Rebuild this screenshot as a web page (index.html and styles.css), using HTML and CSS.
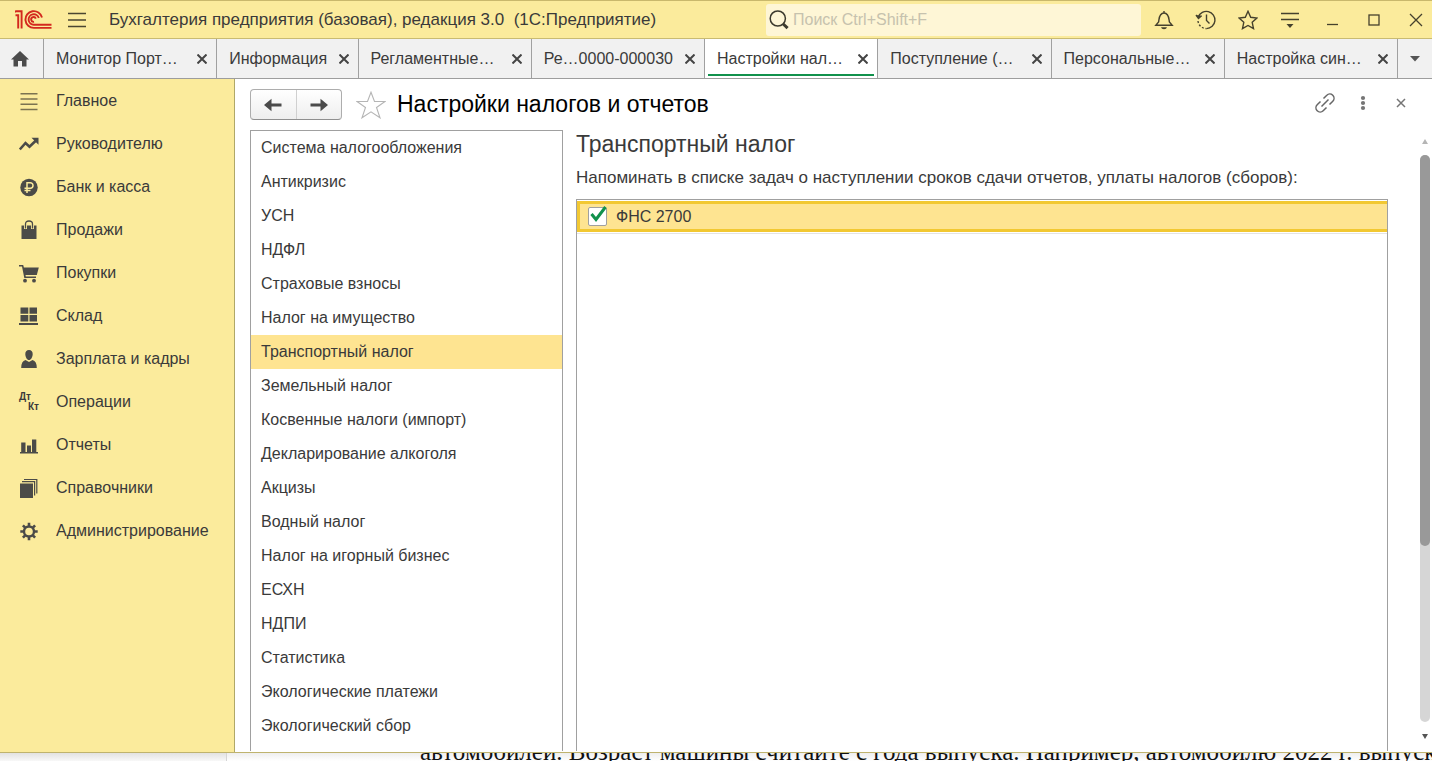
FILE: index.html
```html
<!DOCTYPE html>
<html lang="ru">
<head>
<meta charset="utf-8">
<title>Бухгалтерия предприятия</title>
<link rel="stylesheet" href="styles.css">
</head>
<body>
<div class="window">
  <header class="titlebar">
    <svg class="logo" width="38" height="20" viewBox="0 0 38 20" fill="none" stroke="#d3281e" stroke-width="1.9" aria-label="1С">
      <path d="M.5 5.2H3.2V18.5M0 2.2L1 1.2H6.6V18.5"/>
      <path d="M27 7.4A8.4 8.4 0 1 0 19 17.9H36.5"/>
      <path d="M23.8 8A5.2 5.2 0 1 0 19 14.7H36.5"/>
      <path d="M20.8 8.6A2.4 2.4 0 1 0 19 11.8"/>
    </svg>
    <button class="icon-btn menu-btn" aria-label="Меню"><svg width="18" height="16" viewBox="0 0 18 16" stroke="#4a4630" stroke-width="1.4"><path d="M0 1.5H18M0 8H18M0 14.5H18"/></svg></button>
    <div class="app-title">Бухгалтерия предприятия (базовая), редакция 3.0&nbsp; (1С:Предприятие)</div>
    <label class="search">
      <svg width="20" height="20" viewBox="0 0 20 20" fill="none" stroke="#3c3a2e"><circle cx="8.8" cy="8.5" r="7.6" stroke-width="1.5"/><path d="M14.2 14L18.6 18.2" stroke-width="3"/></svg>
      <input type="text" placeholder="Поиск Ctrl+Shift+F" aria-label="Поиск">
    </label>
    <div class="tools">
      <button class="icon-btn" aria-label="Уведомления"><svg width="20" height="20" viewBox="0 0 20 20" fill="none" stroke="#45412d" stroke-width="1.4"><path d="M10 1V3M1.8 15.3H18.2L15.4 12C14.8 9 15.2 3 10 3S5.2 9 4.6 12Z"/><path d="M7 17.3H13Q12.500 19.300 10 19.300T7 17.300Z" fill="#45412d" stroke="none"/></svg></button>
      <button class="icon-btn" aria-label="История"><svg width="22" height="20" viewBox="0 0 22 20" fill="none" stroke="#45412d" stroke-width="1.4"><path d="M3.300 7A8.600 8.600 0 1 1 11.500 18.600M11.500 4.500V10.500L14.500 13.500"/><path d="M3 11A8.600 8.600 0 0 0 11.500 18.600" stroke-dasharray="2 1.800"/><path d="M1 5L3.500 8.500L6.600 5.800" fill="#45412d"/></svg></button>
      <button class="icon-btn" aria-label="Избранное"><svg width="20" height="20" viewBox="0 0 20 20" fill="none" stroke="#45412d" stroke-width="1.400"><path d="M10 1.300L12.700 7.300L18.900 8L14.200 12.300L15.500 18.600L10 15.500L4.500 18.600L5.800 12.300L1.100 8L7.300 7.300Z"/></svg></button>
      <button class="icon-btn" aria-label="Настройки"><svg width="20" height="20" viewBox="0 0 20 20" fill="none" stroke="#45412d" stroke-width="1.500"><path d="M1 3.500H19M1 9.500H19"/><path d="M6.500 14H13.500L10 18Z" fill="#45412d" stroke="none"/></svg></button>
      <button class="icon-btn" aria-label="Свернуть"><svg width="20" height="20" viewBox="0 0 20 20" stroke="#45412d" stroke-width="1.300"><path d="M5 14.500H16"/></svg></button>
      <button class="icon-btn" aria-label="Развернуть"><svg width="20" height="20" viewBox="0 0 20 20" fill="none" stroke="#45412d" stroke-width="1.300"><rect x="5" y="5" width="10" height="10"/></svg></button>
      <button class="icon-btn" aria-label="Закрыть"><svg width="20" height="20" viewBox="0 0 20 20" stroke="#45412d" stroke-width="1.300"><path d="M4 4L16 16M16 4L4 16"/></svg></button>
    </div>
  </header>

  <nav class="tabs" aria-label="Открытые окна">
    <button class="home" aria-label="Начальная страница"><svg width="18" height="16" viewBox="0 0 18 16" fill="#4b4b4b"><path d="M9 0L18 8.600H15.500V15.500H11V10H7V15.500H2.500V8.600H0Z"/></svg></button>
    <div class="tab"><a href="#">Монитор Порт…</a><button class="tab-close" aria-label="Закрыть"><svg width="10" height="10" viewBox="0 0 10 10"><path d="M.5 .5L9.500 9.500M9.500 .5L.5 9.500"/></svg></button></div>
    <div class="tab short"><a href="#">Информация</a><button class="tab-close" aria-label="Закрыть"><svg width="10" height="10" viewBox="0 0 10 10"><path d="M.5 .5L9.500 9.500M9.500 .5L.5 9.500"/></svg></button></div>
    <div class="tab"><a href="#">Регламентные…</a><button class="tab-close" aria-label="Закрыть"><svg width="10" height="10" viewBox="0 0 10 10"><path d="M.5 .5L9.500 9.500M9.500 .5L.5 9.500"/></svg></button></div>
    <div class="tab"><a href="#">Ре…0000-000030</a><button class="tab-close" aria-label="Закрыть"><svg width="10" height="10" viewBox="0 0 10 10"><path d="M.5 .5L9.500 9.500M9.500 .5L.5 9.500"/></svg></button></div>
    <div class="tab active"><a href="#">Настройки нал…</a><button class="tab-close" aria-label="Закрыть"><svg width="10" height="10" viewBox="0 0 10 10"><path d="M.5 .5L9.500 9.500M9.500 .5L.5 9.500"/></svg></button></div>
    <div class="tab"><a href="#">Поступление (…</a><button class="tab-close" aria-label="Закрыть"><svg width="10" height="10" viewBox="0 0 10 10"><path d="M.5 .5L9.500 9.500M9.500 .5L.5 9.500"/></svg></button></div>
    <div class="tab"><a href="#">Персональные…</a><button class="tab-close" aria-label="Закрыть"><svg width="10" height="10" viewBox="0 0 10 10"><path d="M.5 .5L9.500 9.500M9.500 .5L.5 9.500"/></svg></button></div>
    <div class="tab"><a href="#">Настройка син…</a><button class="tab-close" aria-label="Закрыть"><svg width="10" height="10" viewBox="0 0 10 10"><path d="M.5 .5L9.500 9.500M9.500 .5L.5 9.500"/></svg></button></div>
    <button class="more" aria-label="Все окна"><svg width="10" height="6" viewBox="0 0 10 6" fill="#555"><path d="M0 0H10L5 5.500Z"/></svg></button>
  </nav>

  <div class="body">
    <nav class="sidebar" aria-label="Разделы">
      <a href="#"><svg viewBox="0 0 20 20" stroke="#7b7350" stroke-width="1.500"><path d="M1.500 2.800H18.500M1.500 8H18.500M1.500 13.200H18.500M1.500 18.400H18.500"/></svg>Главное</a>
      <a href="#"><svg viewBox="0 0 20 20" fill="none" stroke="#4b4b48" stroke-width="2.600"><path d="M.8 15.500L6.500 9L10.500 12.800L17 6.500"/><path d="M12.500 3.800H19.500V10.800Z" fill="#4b4b48" stroke="none"/></svg>Руководителю</a>
      <a href="#"><svg viewBox="0 0 20 20"><circle cx="10" cy="10.500" r="8.700" fill="#4b4b48"/><path d="M8 16V5.800H11.300A2.700 2.700 0 0 1 11.300 11.200H5.500M5.500 13.500H11.500" fill="none" stroke="#fbeb9c" stroke-width="1.500"/></svg>Банк и касса</a>
      <a href="#"><svg viewBox="0 0 20 20"><path d="M2.500 5.500H17.500V19H2.500Z" fill="#4b4b48"/><path d="M6.500 9V4Q6.500 1 10 1T13.500 4V9" fill="none" stroke="#fbeb9c" stroke-width="3"/><path d="M6.500 8.500V4Q6.500 1 10 1T13.500 4V8.500" fill="none" stroke="#4b4b48" stroke-width="1.300"/></svg>Продажи</a>
      <a href="#"><svg viewBox="0 0 20 20" fill="#4b4b48"><path d="M0 2H4.200L4.900 4.500H19.800L17.800 12H6.500L6.800 13.500H17V15H5.300L3 3.500H0Z"/><circle cx="6" cy="17.700" r="1.900"/><circle cx="15" cy="17.700" r="1.900"/></svg>Покупки</a>
      <a href="#"><svg viewBox="0 0 20 20" fill="#4b4b48"><path d="M1.500 1.500H9.300V7.800H1.500ZM10.500 1.500H18V7.800H10.500ZM1.500 9H9.300V15.500H1.500ZM10.500 9H18V15.500H10.500ZM0 17H19V19H0Z"/></svg>Склад</a>
      <a href="#"><svg viewBox="0 0 20 20" fill="#4b4b48"><path d="M10 1C12.500 1 13.800 2.800 13.700 5.200C13.600 8 12 11 10 11S6.400 8 6.300 5.200C6.200 2.800 7.500 1 10 1Z"/><path d="M6.500 11L10 13L13.500 11Q17.800 12 17.800 19H2.200Q2.200 12 6.500 11Z"/></svg>Зарплата и кадры</a>
      <a href="#"><span class="dtkt" aria-hidden="true"><b>Дт</b><b>Кт</b></span>Операции</a>
      <a href="#"><svg viewBox="0 0 20 20" fill="#4b4b48"><path d="M1 18V17H2.200V7.500H6.500V17H8V10.500H12V17H13V4.500H17.300V17H19V18.500H1Z"/></svg>Отчеты</a>
      <a href="#"><svg viewBox="0 0 20 20"><path d="M1 5.500H14V20H1Z" fill="#4b4b48"/><path d="M3 3.600H15.600V17.500M5 1.500H17.800V15.500" fill="none" stroke="#4b4b48" stroke-width="1.200"/></svg>Справочники</a>
      <a href="#"><svg viewBox="0 0 20 20" fill="none" stroke="#4b4b48"><circle cx="10" cy="10.500" r="5" stroke-width="2.400"/><path d="M10 1.800V5M10 16V19.200M1.300 10.500H4.500M15.500 10.500H18.700M3.900 4.400L6.200 6.700M13.800 14.300L16.100 16.600M3.900 16.600L6.200 14.300M13.800 6.700L16.100 4.400" stroke-width="2.600"/></svg>Администрирование</a>
    </nav>

    <main class="page">
      <div class="page-head">
        <div class="history">
          <button aria-label="Назад"><svg width="18" height="14" viewBox="0 0 18 14" fill="#4b4b4b"><path d="M0 7L7.500 .8V5.500H17.500V8.500H7.500V13.200Z"/></svg></button>
          <button aria-label="Вперед"><svg width="18" height="14" viewBox="0 0 18 14" fill="#4b4b4b"><path d="M18 7L10.500 .8V5.500H.5V8.500H10.500V13.200Z"/></svg></button>
        </div>
        <button class="icon-btn fav" aria-label="В избранное"><svg width="30" height="28" viewBox="0 0 30 28" fill="none" stroke="#b5b5b5" stroke-width="1.100"><path d="M15 1.200L18.500 10.500H29L20.500 16.500L24 26.800L15 20.800L6 26.800L9.500 16.500L1 10.500H11.500Z"/></svg></button>
        <h1>Настройки налогов и отчетов</h1>
        <div class="page-tools">
          <button class="icon-btn" aria-label="Ссылка"><svg width="22" height="22" viewBox="0 0 22 22" fill="none" stroke="#666" stroke-width="1.500"><path d="M7.500 14.500L14.500 7.500M9.500 6.500L12.800 3.300A4.200 4.200 0 0 1 18.800 9.200L15.500 12.500M12.500 15.500L9.200 18.800A4.200 4.200 0 0 1 3.200 12.800L6.500 9.500"/></svg></button>
          <button class="icon-btn" aria-label="Ещё"><svg width="22" height="22" viewBox="0 0 22 22" fill="#757575"><circle cx="11" cy="6" r="2.100"/><circle cx="11" cy="11" r="2.100"/><circle cx="11" cy="16" r="2.100"/></svg></button>
          <button class="icon-btn" aria-label="Закрыть"><svg width="22" height="22" viewBox="0 0 22 22" stroke="#757575" stroke-width="1.500"><path d="M7 7L15 15M15 7L7 15"/></svg></button>
        </div>
      </div>
      <div class="content">
        <nav class="sections" aria-label="Налоги и отчеты">
          <a href="#">Система налогообложения</a>
          <a href="#">Антикризис</a>
          <a href="#">УСН</a>
          <a href="#">НДФЛ</a>
          <a href="#">Страховые взносы</a>
          <a href="#">Налог на имущество</a>
          <a href="#" class="selected" aria-current="true">Транспортный налог</a>
          <a href="#">Земельный налог</a>
          <a href="#">Косвенные налоги (импорт)</a>
          <a href="#">Декларирование алкоголя</a>
          <a href="#">Акцизы</a>
          <a href="#">Водный налог</a>
          <a href="#">Налог на игорный бизнес</a>
          <a href="#">ЕСХН</a>
          <a href="#">НДПИ</a>
          <a href="#">Статистика</a>
          <a href="#">Экологические платежи</a>
          <a href="#">Экологический сбор</a>
        </nav>
        <section class="detail">
          <h2>Транспортный налог</h2>
          <p>Напоминать в списке задач о наступлении сроков сдачи отчетов, уплаты налогов (сборов):</p>
          <div class="grid">
            <label class="grid-row">
              <span class="check"><input type="checkbox" checked><svg width="20" height="20" viewBox="0 0 20 20" fill="none" stroke="#11914c" stroke-width="3"><path d="M3.500 8L8 13.500L17.500 1"/></svg></span>
              ФНС 2700
            </label>
          </div>
        </section>
        <div class="scroll">
          <button aria-label="Вверх"><svg width="6" height="5" viewBox="0 0 6 5" fill="#b5b5b5"><path d="M0 5H6L3 0Z"/></svg></button>
          <div class="track"><div class="thumb"></div></div>
          <button aria-label="Вниз"><svg width="6" height="5" viewBox="0 0 6 5" fill="#555"><path d="M0 0H6L3 5Z"/></svg></button>
        </div>
      </div>
    </main>
  </div>
</div>
<div class="behind">
  <div class="behind-side"></div>
  <div class="behind-doc"><p>автомобилей. Возраст машины считайте с года выпуска. Например, автомобилю 2022 г. выпуска</p></div>
</div>
</body>
</html>
```
FILE: styles.css
```css
* { box-sizing: border-box; }

body {
  margin: 0;
  height: 100vh;
  display: flex;
  flex-direction: column;
  overflow: hidden;
  font: 16px/20px "Liberation Sans", Arial, sans-serif;
  color: #3a3a3a;
  background: #fff;
}

button {
  border: 0;
  padding: 0;
  background: none;
  font: inherit;
  color: inherit;
  display: flex;
  align-items: center;
  justify-content: center;
}

a { color: inherit; text-decoration: none; }
svg { display: block; flex: none; }

.window {
  flex: 1;
  min-height: 0;
  display: flex;
  flex-direction: column;
  background: #fff;
  border-top: 1px solid #c9b86c;
  border-bottom: 1px solid #bfb36e;
}

.titlebar {
  flex: none;
  height: 38px;
  display: flex;
  align-items: center;
  padding-left: 15px;
  background: #fbeb9c;
  border-bottom: 1px solid #c9bb72;
}
.menu-btn { margin-left: 15px; }
.app-title { flex: 1; margin-left: 23px; font-size: 17px; white-space: nowrap; }

.search {
  width: 375px;
  height: 32px;
  display: flex;
  align-items: center;
  gap: 4px;
  padding-left: 3px;
  border-radius: 3px;
  background: #fef6d6;
}
.search input {
  flex: 1;
  min-width: 0;
  border: 0;
  padding: 0;
  outline: 0;
  background: none;
  font: inherit;
}
.search input::placeholder { color: #c6c2ae; opacity: 1; }

.tools {
  display: flex;
  gap: 22px;
  padding: 0 6px 0 13px;
}
.tools .icon-btn { width: 20px; height: 20px; }

.tabs {
  flex: none;
  height: 40px;
  display: flex;
  background: #f1f1f1;
  border-bottom: 1px solid #9d9d9d;
}
.home { width: 44px; padding-right: 3px; border-right: 1px solid #a0a0a0; }
.more { width: 34px; }
.tab {
  flex: 1 1 173px;
  min-width: 0;
  display: flex;
  align-items: center;
  justify-content: space-between;
  padding: 0 9px 0 12px;
  border-right: 1px solid #a0a0a0;
  position: relative;
  white-space: nowrap;
}
.tab.short { flex-basis: 141px; }
.tab.active { background: #fff; }
.tab.active::after {
  content: "";
  position: absolute;
  left: 3px;
  right: 3px;
  bottom: 2px;
  height: 2px;
  background: #11914c;
}
.tab-close svg { stroke: #444; stroke-width: 2; }

.body { flex: 1; min-height: 0; display: flex; }

.sidebar {
  flex: none;
  width: 235px;
  background: #fbeb9c;
  border-right: 1px solid #b0a868;
}
.sidebar a {
  height: 43px;
  display: flex;
  align-items: center;
  gap: 17px;
  padding-left: 19px;
}
.sidebar svg, .dtkt { width: 20px; height: 20px; }
.dtkt {
  display: flex;
  flex-direction: column;
  font-size: 10px;
  line-height: 10px;
}
.dtkt b:last-child { align-self: flex-end; }

.page {
  flex: 1;
  min-width: 0;
  display: flex;
  flex-direction: column;
  padding-left: 15px;
}
.page-head {
  flex: none;
  height: 51px;
  display: flex;
  align-items: center;
  padding-right: 20px;
}
.history {
  display: flex;
  width: 92px;
  height: 31px;
  border: 1px solid #adadad;
  border-bottom-color: #8f8f8f;
  border-radius: 4px;
  background: linear-gradient(#fff, #eee);
}
.history button { flex: 1; }
.history button + button { border-left: 1px solid #d0d0d0; }
.fav { margin-left: 14px; }
h1 {
  flex: 1;
  margin: 0 0 2px 11px;
  font-size: 23px;
  line-height: 28px;
  font-weight: 400;
  color: #000;
}
.page-tools { display: flex; gap: 16px; padding-bottom: 3px; }

.content { flex: 1; min-height: 0; display: flex; }
.sections {
  flex: none;
  width: 313px;
  margin-bottom: 1px;
  overflow: hidden;
  border: 1px solid #a0a0a0;
  border-bottom: 0;
}
.sections a {
  display: block;
  height: 34px;
  padding: 0 10px;
  line-height: 34px;
}
.sections .selected { background: #fee491; }

.detail {
  flex: 1;
  min-width: 0;
  display: flex;
  flex-direction: column;
  margin: 0 32px 1px 13px;
}
h2 {
  margin: 0;
  font-size: 23px;
  line-height: 28px;
  font-weight: 400;
}
.detail p { margin: 10px 0 11px; font-size: 17px; white-space: nowrap; }
.grid {
  flex: 1;
  border: 1px solid #a0a0a0;
  border-bottom: 0;
  padding-top: 1px;
}
.grid-row {
  display: flex;
  align-items: center;
  gap: 9px;
  height: 31px;
  padding-left: 8px;
  border: 3px solid #f2c832;
  border-right: 0;
  background: #fee491;
  box-shadow: 0 1px #fff, 0 2px #e4e4e4;
}
.check { position: relative; width: 19px; height: 19px; }
.check input {
  appearance: none;
  width: 19px;
  height: 19px;
  margin: 0;
  display: block;
  background: #fff;
  border: 1px solid #a0a0a0;
  border-radius: 2px;
}
.check svg { position: absolute; left: 0; top: -1px; pointer-events: none; }

.scroll {
  flex: none;
  width: 12px;
  display: flex;
  flex-direction: column;
  padding: 2px 2px 7px 0;
}
.scroll button { height: 18px; }
.track {
  flex: 1;
  margin: 5px 0;
  border-radius: 5px;
  background: #d6d6d6;
}
.thumb { height: 69%; border-radius: 5px; background: #999; }

.behind {
  flex: none;
  height: 8px;
  display: flex;
  overflow: hidden;
  background: linear-gradient(#e2e2e2, #f8f8f8);
}
.behind-side { flex: none; width: 227px; border-right: 1px solid #d5d5d5; }
.behind-doc {
  flex: 1;
  min-width: 0;
  display: flex;
  align-items: flex-end;
  padding-left: 193px;
  background: linear-gradient(#eee, #fff);
}
.behind-doc p {
  margin: 0;
  white-space: nowrap;
  font: 25px/18px "Liberation Serif", "Times New Roman", serif;
  color: #111;
}
```
